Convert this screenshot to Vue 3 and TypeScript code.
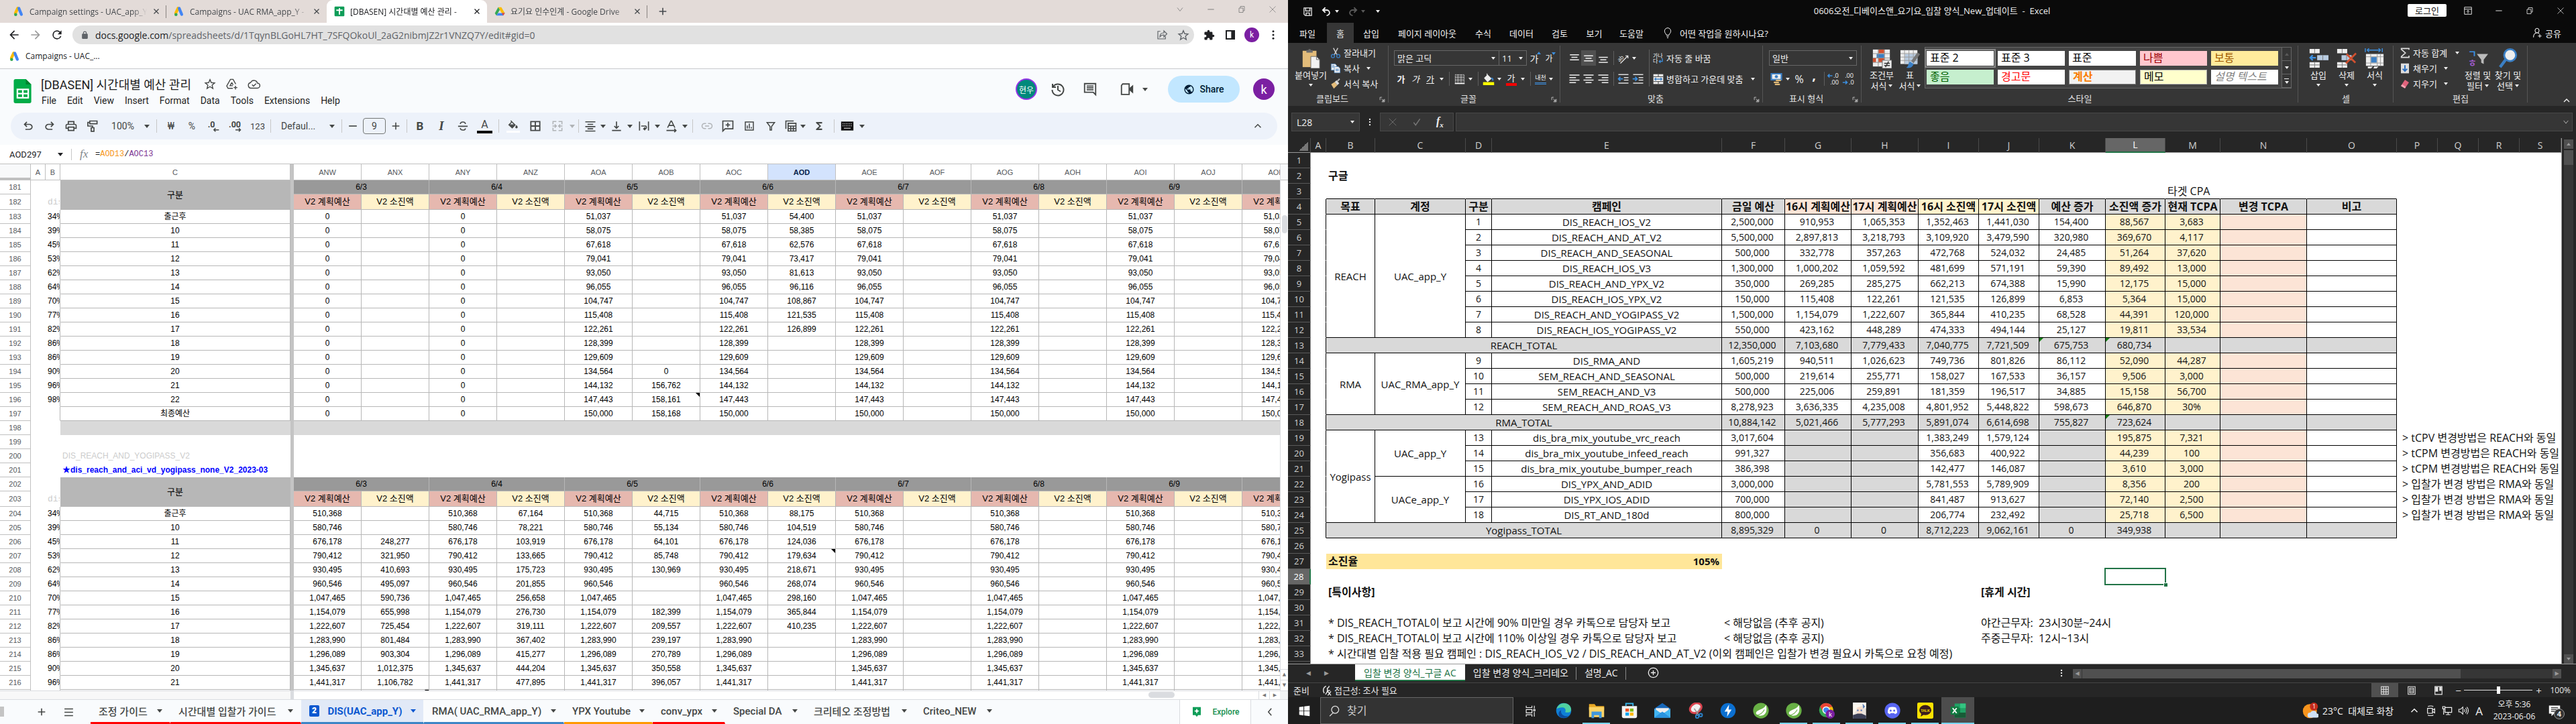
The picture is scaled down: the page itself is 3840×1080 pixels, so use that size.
<script setup lang="ts">
import { h } from 'vue'

type Slot = { k: 'icon' | 'text' | 'caret' | 'sep' | 'big'; n?: string; t?: string; w: number; c?: string; s?: number }

const st = (d: string, w = 2) => `<path d="${d}" fill="none" stroke="currentColor" stroke-width="${w}"/>`
const fl = (d: string) => `<path d="${d}" fill="currentColor"/>`

const ICONS: Record<string, [number, string]> = {
  ads: [24, '<path d="M9.5 5 4.5 16" stroke="#fbbc04" stroke-width="6.5" stroke-linecap="round"/><path d="M12.2 5.2l5.6 13.6" stroke="#4285f4" stroke-width="6.5" stroke-linecap="round"/><circle cx="5" cy="19" r="3.4" fill="#34a853"/>'],
  sheetTab: [24, '<rect x="1" y="1" width="22" height="22" rx="2" fill="#0f9d58"/><path d="M12 5v14M5 9.5h14" stroke="#fff" stroke-width="3"/>'],
  drive: [24, '<path d="M8.5 2.5h7l8 13.5h-7z" fill="#fbbc04"/><path d="M8.5 2.5 12 8.600 4.500 21.500 1 16z" fill="#34a853"/><path d="M4.500 21.500 8 15.800h15.500L19.500 21.500z" fill="#4285f4"/><path d="m16.500 15.800 7 0-4 5.700z" fill="#ea4335"/>'],
  close: [24, st('M5 5l14 14M19 5L5 19', 2.6)],
  closeThin: [24, st('M3 3l18 18M21 3L3 21', 1.4)],
  plus: [24, st('M12 4v16M4 12h16', 2.4)],
  minus: [24, st('M5 12h14', 2)],
  chevDown: [24, st('M4 7l8 10 8-10', 1.6)],
  chevUp: [24, st('M6 15l6-6 6 6')],
  chevLeft: [24, st('M15 5l-6 7 6 7')],
  min: [24, st('M4 12h16', 1.6)],
  restore: [24, st('M4 8h12v13H4zM8 8V3h12v13h-4', 1.6)],
  back: [24, fl('M20 11H7.800l5.600-5.600L12 4l-8 8 8 8 1.400-1.400L7.800 13H20v-2z')],
  fwd: [24, fl('M12 4l-1.400 1.400L16.200 11H4v2h12.200l-5.600 5.600L12 20l8-8z')],
  reload: [24, fl('M17.650 6.350A7.950 7.950 0 0 0 12 4a8 8 0 1 0 7.730 10h-2.080A6 6 0 1 1 12 6c1.660 0 3.140.69 4.220 1.780L13 11h7V4z')],
  lock: [24, fl('M18 8h-1V6A5 5 0 0 0 7 6v2H6a2 2 0 0 0-2 2v10c0 1.100.9 2 2 2h12a2 2 0 0 0 2-2V10a2 2 0 0 0-2-2zm-3.100 0H9.100V6a2.900 2.900 0 0 1 5.800 0z')],
  shareUrl: [24, st('M9 5H4v15h15v-5M8 16c0-6 4-8 8-8V4l6 6-6 6v-4c-4 0-6 1-8 4z', 1.6)],
  star: [24, st('M12 3.500l2.600 6.200 6.700.6-5.100 4.400 1.600 6.600L12 17.700l-5.800 3.600 1.600-6.600-5.100-4.400 6.700-.6z', 1.8)],
  puzzle: [24, fl('M20.500 11H19V7a2 2 0 0 0-2-2h-4V3.500a2.500 2.500 0 0 0-5 0V5H4a2 2 0 0 0-2 2v3.800h1.500a2.700 2.700 0 0 1 0 5.400H2V20c0 1.100.9 2 2 2h3.800v-1.500a2.700 2.700 0 0 1 5.400 0V22H17a2 2 0 0 0 2-2v-4h1.500a2.500 2.500 0 0 0 0-5z')],
  panel: [24, '<path d="M3 3h18v18H3z" fill="none" stroke="currentColor" stroke-width="3"/><path d="M14 3h7v18h-7z" fill="currentColor"/>'],
  dots: [24, '<circle cx="12" cy="5" r="2"/><circle cx="12" cy="12" r="2"/><circle cx="12" cy="19" r="2"/>'],
  driveAdd: [24, st('M19.500 12 14.500 3h-5L2.500 15.500 5 20h9M12 9l-3.200 6H14M12 9l2.500 4.500M19 15v7M15.500 18.500h7', 1.800)],
  cloud: [24, st('M18.500 10A6.700 6.700 0 0 0 5.800 9.200 5.200 5.200 0 0 0 6.500 19.500h12a4.700 4.700 0 0 0 0-9.500zM8.500 13l2.700 2.700 4.800-4.800', 1.800)],
  history: [24, st('M4 4v5h5M4.500 9A8.500 8.500 0 1 1 3.500 13M12 7v6l4 2.500')],
  comment: [24, st('M3 3h18v18l-4-4H3zM6.500 7h11M6.500 10h11M6.500 13h11')],
  video: [24, '<path d="M5 3.500h10.500v17H3V6z" fill="none" stroke="currentColor" stroke-width="2"/><path d="M16 10l6-5v14l-6-5z" fill="currentColor"/>'],
  globe: [24, '<path d="M12 2a10 10 0 1 0 0 20 10 10 0 0 0 0-20zm-1 17.900A8 8 0 0 1 4.200 10.200L9 15v1c0 1.100.9 2 2 2zm6.900-2.500A2 2 0 0 0 16 16h-1v-3a1 1 0 0 0-1-1H8v-2h2a1 1 0 0 0 1-1V7h2a2 2 0 0 0 2-2v-.400a8 8 0 0 1 2.900 12.800z" fill="currentColor"/>'],
  undo: [24, fl('M7 19v-2h7.100q1.575 0 2.737-1T18 13.500 16.838 11 14.100 10H7.800l2.600 2.600L9 14 4 9l5-5 1.400 1.400L7.800 8h6.300q2.425 0 4.163 1.575T20 13.500t-1.737 3.925T14.100 19z')],
  redo: [24, fl('M9.900 19q-2.425 0-4.163-1.575T4 13.500t1.737-3.925T9.900 8h6.300l-2.600-2.600L15 4l5 5-5 5-1.400-1.400 2.600-2.600H9.900q-1.575 0-2.737 1T6 13.500 7.163 16 9.900 17H17v2z')],
  print: [24, fl('M19 8h-1V3H6v5H5c-1.660 0-3 1.340-3 3v6h4v4h12v-4h4v-6c0-1.660-1.340-3-3-3zM8 5h8v3H8V5zm8 12v2H8v-4h8v2zm2-2v-2H6v2H4v-4c0-.55.45-1 1-1h14c.55 0 1 .45 1 1v4h-2z')],
  paint: [24, st('M7 3h13v5H7zM7 5.500H3.500V12H12v3M9.500 15h5v6.500h-5z')],
  dec0: [24, '<text x="2" y="14" font-size="15" font-weight="700" font-family="Roboto, sans-serif">.0</text><path d="M22 19h-9m3-3-3 3 3 3" fill="none" stroke="currentColor" stroke-width="1.800"/>'],
  dec00: [24, '<text x="0" y="14" font-size="15" font-weight="700" font-family="Roboto, sans-serif">.00</text><path d="M12 19h9m-3-3 3 3-3 3" fill="none" stroke="currentColor" stroke-width="1.800"/>'],
  strike: [24, st('M2.500 12.500h19M17 8c0-2.500-2-4-5-4S7 5.500 7 8M7 16c0 2.500 2 4 5 4s5-1.500 5-3.500', 2.200)],
  fill: [24, '<path d="M7 3l9 9-6 6-7-6.500 6-6zM5 11.500h10" fill="none" stroke="currentColor" stroke-width="2"/><path d="M4 12h11l-5 5.500z" fill="currentColor"/><path d="M19 12s2.500 3 2.500 4.500a2.400 2.400 0 0 1-5 0C16.500 15 19 12 19 12z" fill="currentColor"/>'],
  borders: [24, st('M4 4h16v16H4zM12 4v16M4 12h16', 2.200)],
  merge: [24, st('M10 4H4v5M14 4h6v5M10 20H4v-5M14 20h6v-5M3 12h7m-3-3 3 3-3 3M21 12h-7m3-3-3 3 3 3', 1.800)],
  center: [24, st('M3 4.500h18M7 9h10M3 13h18M7 17h10M3 21h18', 2)],
  vbottom: [24, st('M4 20h16M12 4v12m-4-4 4 4 4-4', 2)],
  wrapTxt: [24, st('M4 4v16M20 4v16M7 12h8a3 3 0 0 1 0 5h-3m2-2.500-2.500 2.500 2.500 2.500', 2)],
  rotate: [24, st('M5 15L11 3h1l6 12M7.500 11h8M3 20h17m-3-3 3 3-3 3', 2)],
  link: [24, st('M10 7H7a5 5 0 0 0 0 10h3M14 7h3a5 5 0 0 1 0 10h-3M8 12h8', 2)],
  addCom: [24, st('M3 3h18v14H7l-4 4zM12 6v8M8 10h8', 2)],
  chart: [24, st('M4 4h16v16H4zM8 17v-6M12 17V7M16 17v-3', 2)],
  funnel: [24, st('M4.500 5h15l-6 8v7h-3v-7z', 2)],
  fview: [24, st('M3 17V3h14M7 7h14v14H7zM7 12h14M7 16.500h14M11.700 12v9M16.300 12v9', 2)],
  sigma: [24, fl('M18 4H6v2l6.500 6L6 18v2h12v-3h-7l5-5-5-5h7z')],
  kb: [24, '<path d="M1 4h22v16H1z" fill="#111"/><path d="M3.500 8h17M3.500 11.500h17" stroke="#ccc" stroke-width="1.500" stroke-dasharray="1.500 1.500"/><path d="M6 16h12" stroke="#ccc" stroke-width="1.500"/>'],
  burger: [24, st('M3 5h18M3 12h18M3 19h18', 2.200)],
  explore: [24, '<path d="M3 1h18v18h-6l-3 4-3-4H3z" fill="#0f9d58"/><path d="M12 4l1.800 4.200L18 10l-4.200 1.800L12 16l-1.800-4.200L6 10l4.200-1.800z" fill="#fff"/>'],
  sheets: [40, '<path d="M8 0h17l9 9v28a3 3 0 0 1-3 3H8a3 3 0 0 1-3-3V3a3 3 0 0 1 3-3z" fill="#00ac47"/><path d="M25 0l9 9h-9z" fill="#00832d"/><path d="M11 17h18v14H11zM11 24h18M20 17v14" fill="none" stroke="#fff" stroke-width="2.600"/>'],
  xSave: [24, st('M3 3h18v18H6l-3-3zM7 3v7h10V3M8 21v-6h8v6', 2)],
  xUndo: [24, '<path d="M9 2L3 8l6 6M4 8h8a7 6.500 0 0 1 0 13" fill="none" stroke="currentColor" stroke-width="3"/>'],
  xRedo: [24, '<path d="M15 2l6 6-6 6M20 8h-8a7 6.500 0 0 0 0 13" fill="none" stroke="currentColor" stroke-width="3"/>'],
  ribOpt: [24, st('M3 3h18v18H3zM3 8h18M12 19v-8m-3.500 3.500L12 11l3.500 3.500', 1.600)],
  bulb: [24, st('M9 17c0-3-4-4-4-9a7 7 0 0 1 14 0c0 5-4 6-4 9zM9.500 20h5M10.500 23h3', 1.500)],
  person: [24, st('M12 12a4.500 5 0 1 0-.100 0c-5 0-8 4-8 10M12 12c2 0 3.500.6 5 2M18 15v8M14 19h8', 1.600)],
  paste: [32, '<path d="M3 4h22v26H3z" fill="#e3bc7a"/><path d="M9 7V3h3a2 2 0 0 1 4 0h3v4z" fill="#6b6b6b"/><path d="M16 13h9l5 5v14H16z" fill="#f2f2f2" stroke="#666"/><path d="M25 13v5h5" fill="none" stroke="#666"/>'],
  cut: [24, '<path d="M7 1l8 15M17 1L9 16" stroke="#ccc" stroke-width="2.200" fill="none"/><circle cx="6" cy="19" r="3.600" fill="none" stroke="#3b7fc4" stroke-width="2"/><circle cx="18" cy="19" r="3.600" fill="none" stroke="#3b7fc4" stroke-width="2"/>'],
  copy: [24, '<path d="M2 2h9l3 3v11H2z" fill="#eee" stroke="#3b7fc4"/><path d="M9 8h9l4 4v10H9z" fill="#eee" stroke="#3b7fc4"/><path d="M12 14h7M12 17h7M4 6h5M4 9h4" stroke="#3b7fc4" stroke-width="1.500"/>'],
  brush: [24, '<path d="M2 13l8-5 6 7-8 8z" fill="#e3bc7a"/><path d="M10 8l4-4 6 7-4 4z" fill="#ddd"/><path d="M16 6l5-5" stroke="#bbb" stroke-width="3"/>'],
  xBorder: [24, '<path d="M2 2h20v19H2z" fill="#555"/><path d="M2 2h20v19H2zM2 8h20M2 14h20M8 2v19M15 2v19" fill="none" stroke="#ddd" stroke-width="1.500" stroke-dasharray="2 1.500"/><path d="M1 22h22" stroke="#fff" stroke-width="2"/>'],
  xFill: [24, '<path d="M9 1v6M4 10l6-6 7 7-7 6z" fill="#eee" stroke="#eee" stroke-width="1.500"/><path d="M17 10c3 0 4 2 3 5" stroke="#3b7fc4" stroke-width="3" fill="none"/><path d="M1 18h22v6H1z" fill="#ff0"/>'],
  tAl: [24, st('M3 5h18M6 10h12M3 15h18', 2)],
  mAl: [24, st('M3 7h18M6 12h12M3 17h18', 2)],
  bAl: [24, st('M3 10h18M6 15h12M3 20h18', 2)],
  lAl: [24, st('M2 4h20M2 9h13M2 14h20M2 19h13', 2)],
  cAl: [24, st('M2 4h20M6 9h12M2 14h20M6 19h12', 2)],
  rAl: [24, st('M2 4h20M9 9h13M2 14h20M9 19h13', 2)],
  orient: [24, '<text x="0" y="15" font-size="11" transform="rotate(-45 8 12)" font-family="Open Sans, sans-serif">ab</text><path d="M6 22L21 7m-5 0h5v5" fill="none" stroke="currentColor" stroke-width="1.600"/>'],
  outd: [24, '<path d="M2 3h20M13 9h9M13 14h9M2 20h20" stroke="#ddd" stroke-width="2"/><path d="M11 11.500H2m4-4-4 4 4 4" fill="none" stroke="#3b8fe0" stroke-width="2.200"/>'],
  ind: [24, '<path d="M2 3h20M13 9h9M13 14h9M2 20h20" stroke="#ddd" stroke-width="2"/><path d="M1 11.500h9m-4-4 4 4-4 4" fill="none" stroke="#3b8fe0" stroke-width="2.200"/>'],
  wrapX: [24, '<text x="0" y="11" font-size="12" font-family="Noto Sans CJK KR, sans-serif">가나</text><text x="0" y="23" font-size="12" font-family="Noto Sans CJK KR, sans-serif">다</text><path d="M21 12v7h-7m3-3-3 3 3 3" fill="none" stroke="#3b8fe0" stroke-width="2"/>'],
  mergeX: [24, '<path d="M1 1h22v22H1z" fill="#eee"/><path d="M1 6.500h22M1 17.500h22M12 1v5.500M12 17.500V23" stroke="#444" stroke-width="1.500"/><path d="M4 12h16M7 9l-3 3 3 3M17 9l3 3-3 3" stroke="#3b7fc4" fill="none" stroke-width="2"/>'],
  money: [24, '<path d="M2 1h20v12H2z" fill="#eee" stroke="#3b7fc4" stroke-width="3"/><circle cx="12" cy="7" r="3" fill="#3b7fc4"/><path d="M11 13h10v3H11zM7 17h10v3H7zM9 21h10v3H9z" fill="#e3bc7a"/>'],
  xd0: [24, '<text x="11" y="10" font-size="11" font-family="Open Sans, sans-serif">.0</text><text x="5" y="22" font-size="11" font-family="Open Sans, sans-serif">.00</text><path d="M9 6H1m3-3L1 6l3 3" stroke="#3b8fe0" fill="none" stroke-width="2"/>'],
  xd00: [24, '<text x="5" y="10" font-size="11" font-family="Open Sans, sans-serif">.00</text><text x="12" y="22" font-size="11" font-family="Open Sans, sans-serif">.0</text><path d="M1 18h8m-3-3 3 3-3 3" stroke="#3b8fe0" fill="none" stroke-width="2"/>'],
  cond: [32, '<path d="M2 2h27v27H2z" fill="#eee"/><path d="M11 2h9v6h-9zM11 16h9v6h-9zM2 16h5v6H2z" fill="#d2502f"/><path d="M8 9h12v6H8z" fill="#3b7fc4"/><path d="M2 8.500h27M2 15.500h27M2 22.500h27M10.500 2v27M20.500 2v27" stroke="#888" fill="none"/><path d="M17 19h15v13H17z" fill="#eee" stroke="#666"/><path d="M20 24h9M20 27.500h9M27 21l-5 9" stroke="#333" stroke-width="1.500"/>'],
  fmtTbl: [32, '<path d="M1 3h27v22H1z" fill="#eee"/><path d="M8 9h20v16H8z" fill="#b8cbe0"/><path d="M1 8.500h27M1 14h27M1 19.500h27M7.500 3v22M14.500 3v22M21.500 3v22" stroke="#999" fill="none"/><path d="M30 8L20 22" stroke="#777" stroke-width="5"/><path d="M16 21l6 4c-2 6-7 7-12 6 4-2 3-6 6-10z" fill="#3b7fc4"/>'],
  insC: [32, '<path d="M2 1h16v7H2zM2 22h16v9H2z" fill="#eee"/><path d="M14 11h18v8H14z" fill="#b8cbe0"/><path d="M10 1v7M10 22v9M2 26.500h16M23 11v8" stroke="#777" fill="none"/><path d="M12 15H3m4-4-4 4 4 4" stroke="#3b8fe0" stroke-width="2.500" fill="none"/>'],
  delC: [32, '<path d="M1 1h16v7H1zM1 22h16v9H1z" fill="#eee"/><path d="M8 11h16v8H8z" fill="#b8cbe0"/><path d="M9 1v7M9 22v9M1 26.500h16M16 11v8" stroke="#777" fill="none"/><path d="M16 9l14 14M31 8L15 24" stroke="#d2502f" stroke-width="3" fill="none"/>'],
  fmtC: [32, '<path d="M2 9h28v19H2zM5 29h8l-3 3H5zM15 29h7l-3 3h-5z" fill="#eee"/><path d="M10 14h9v9h-9z" fill="#3b7fc4"/><path d="M2 13.500h28M2 23.500h28M9.500 9v19M20 9v19M25 9v19" stroke="#999" fill="none"/><path d="M1 0v6M28 0v6M4 3h21M7 0L4 3l3 3M22 0l3 3-3 3" stroke="#3b8fe0" stroke-width="1.500" fill="none"/>'],
  sigX: [24, '<path d="M21 5V2H4v2l9 8-9 8v2h17v-4" fill="none" stroke="#ddd" stroke-width="2.500"/>'],
  down: [24, '<path d="M3 1h18v22H3z" fill="#ddd"/><path d="M12 5v13m-5-5 5 5 5-5" fill="none" stroke="#2b6fc0" stroke-width="3"/>'],
  erase: [24, '<path d="M12 3l9 6-9 13-9-5z" fill="#e0637c"/><path d="M3 17l3-4 8 6-2 3z" fill="#f2a6b4"/>'],
  sort: [32, '<text x="0" y="14" font-size="15" font-weight="700" fill="#3b8fe0" font-family="Noto Sans CJK KR, sans-serif">ㄱ</text><text x="0" y="29" font-size="15" font-weight="700" fill="#9b59c6" font-family="Noto Sans CJK KR, sans-serif">ㅎ</text><path d="M14 9h18l-7 9v7l-4-2v-5z" fill="#bbb"/>'],
  find: [32, '<path d="M12 18L3 30" stroke="#3b7fc4" stroke-width="4.500"/><circle cx="19" cy="11" r="9.500" fill="#eee" stroke="#3b7fc4" stroke-width="3"/>'],
  check: [24, st('M4 13l5 7L20 4', 2.600)],
  winlogo: [24, fl('M1 4l9-1.300v8.800H1zM11.500 2.500L23 1v10.500H11.500zM1 12.700h9v8.700L1 20zM11.500 12.700H23V23l-11.500-1.600z')],
  search: [24, st('M10 16L3 23M14.500 17a7.500 7.500 0 1 0-.010 0z', 1.800)],
  taskview: [24, st('M3 1v4h12V1M3 9h12v7H3zM3 24v-4h12v4M20 1v6M20 14v10M18.500 9h3v3h-3z', 1.600)],
  edge: [32, '<circle cx="16" cy="16" r="15" fill="#0f7fd6"/><path d="M2 12C5 3 15-1 23 2.500c7 3 9 10 7 14-2 4-9 4-11 2 2-4 0-9-6-9-5 0-9 2-11 2.500z" fill="#4fd0a0"/><path d="M11 15c-2 7 4 13 12 12 3 0 5-2 6-4-4 7-14 10-21 5-4-5-2-11 3-13z" fill="#0b4a9e"/>'],
  folder: [32, '<path d="M1 3h11l3 4h16v8H1z" fill="#e8a825"/><path d="M1 9h30v20H1z" fill="#fbd467"/><path d="M6 18h20v13h-5v-6H11v6H6z" fill="#3f97dd"/>'],
  store: [32, '<path d="M9 7V2h14v5" fill="none" stroke="#35b1e6" stroke-width="2.500"/><path d="M1 7h30v20a4 4 0 0 1-4 4H5a4 4 0 0 1-4-4z" fill="#f3f3f3"/><path d="M8 12h7v6H8z" fill="#f25022"/><path d="M17 12h7v6h-7z" fill="#7fba00"/><path d="M8 20h7v6H8z" fill="#00a4ef"/><path d="M17 20h7v6h-7z" fill="#ffb900"/>'],
  mail: [32, '<path d="M0 12L16 1l16 11v18H0z" fill="#1666b8"/><path d="M3 11h26v9H3z" fill="#eee"/><path d="M0 12l16 11L32 12v18H0z" fill="#41b4f2"/><path d="M0 30l16-12 16 12z" fill="#2a93df"/>'],
  snip: [32, '<ellipse cx="17" cy="11" rx="12" ry="9" fill="#f0f0f0" stroke="#d9434e" stroke-width="4" transform="rotate(-30 17 11)"/><path d="M14 12l10 14M26 10l-9 16" stroke="#999" stroke-width="2"/><circle cx="20" cy="28" r="3" fill="none" stroke="#2a82c9" stroke-width="2.500"/><circle cx="27" cy="25" r="3" fill="none" stroke="#2a82c9" stroke-width="2.500"/>'],
  bolt: [32, '<circle cx="16" cy="16" r="15" fill="#0b6fd0"/><path d="M18 4l-9 14h6l-1 10 9-14h-6z" fill="#fff"/>'],
  leaf: [32, '<circle cx="16" cy="16" r="15.500" fill="#68b045"/><path d="M26 5c3 11 0 20-9 21-6 1-10-2-11-5 2-8 14-5 20-16z" fill="#fff"/><path d="M7 25c6 0 12-4 16-11" stroke="#68b045" stroke-width="1.500" fill="none"/>'],
  chrome: [32, '<circle cx="15" cy="15" r="14" fill="#34a853"/><path d="M15 1a14 14 0 0 1 12.500 8H15L9 19 3 8A14 14 0 0 1 15 1z" fill="#ea4335"/><path d="M27.500 9A14 14 0 0 1 15 29l6-10V9z" fill="#fbbc04"/><circle cx="15" cy="15" r="6.500" fill="#4285f4" stroke="#fff" stroke-width="2"/><circle cx="23" cy="23" r="9" fill="#7b1fa2"/><text x="20" y="28" font-size="13" fill="#fff" font-family="Roboto, sans-serif">k</text>'],
  anime: [32, '<path d="M3 0h26v32H3z" fill="#e9e3dc"/><path d="M3 0h26v12L20 6l-9 7-8 12z" fill="#fbf7ee"/><path d="M10 11c4-3 9-3 12 0l-2 11h-8z" fill="#f8dcc9"/><path d="M11 14h3v3h-3zM18 14h3v3h-3zM22 2l5 6-4 4z" fill="#5b7fb8"/><path d="M3 25l9-3h8l9 4v6H3z" fill="#3b3f55"/>'],
  discord: [32, '<circle cx="16" cy="16" r="15.500" fill="#5865f2"/><path d="M9 10c4-2 10-2 14 0 2 4 3 8 2 11l-4 2-1.500-2h-7L11 23l-4-2c-1-3 0-7 2-11z" fill="#fff"/><circle cx="12.500" cy="16" r="2" fill="#5865f2"/><circle cx="19.500" cy="16" r="2" fill="#5865f2"/>'],
  kakao: [32, '<rect width="32" height="32" rx="3" fill="#fae100"/><ellipse cx="16" cy="15" rx="12" ry="10" fill="#3a1d1d"/><path d="M8 22l-1 6 6-4z" fill="#3a1d1d"/><text x="7" y="18" font-size="7" font-weight="700" fill="#fae100" font-family="Liberation Sans, sans-serif">TALK</text>'],
  excel: [32, '<path d="M9 2h22v28H9z" fill="#21a366"/><path d="M20 2h11v9H20z" fill="#33c481"/><path d="M9 11h11v9H9z" fill="#107c41"/><path d="M9 20h22v10H9z" fill="#185c37"/><rect x="1" y="8" width="16" height="16" fill="#107c41"/><path d="M5 11l8 10M13 11L5 21" stroke="#fff" stroke-width="2.500"/>'],
  sun: [32, '<circle cx="15" cy="17" r="14" fill="#f7941d"/><path d="M15 30a5 5 0 0 1 1-10 7 7 0 0 1 13 2 4 4 0 0 1 0 8z" fill="#cfe0f5"/><circle cx="23" cy="8" r="8" fill="#c42b1c"/><text x="20" y="12" font-size="12" fill="#fff" font-family="Open Sans, sans-serif">1</text>'],
  meet: [24, st('M4 7h11v11H4zM15 11l5-3v9l-5-3M5 3c3-2 9-2 12 0M5 22c3 2 9 2 12 0', 1.800)],
  net: [24, st('M7 5h15v11H7zM14 16v5M9 21h10M2 3h5v5H2zM4 8v13', 1.800)],
  vol: [24, st('M2 9h4l5-5v16l-5-5H2zM14 9c1.500 2 1.500 4 0 6M17 6c3 4 3 8 0 12M20 4c4 5 4 11 0 16', 1.600)],
  note: [24, '<path d="M1 2h22v16H11l-5 5v-5H1z" fill="#fff"/><path d="M5 6.500h14M5 10h14M5 13.500h9" stroke="#222" stroke-width="1.500"/>'],
  access: [24, st('M10 2C4 5 2 12 6 18M12 8c4-3 5-3 5-6M13 8v6l-4 7M13 12h6M14 14l7 9M21 14l-7 9', 2.200)],
  vGrid: [24, st('M3 2h18v20H3zM3 9h18M3 15.500h18M9 2v20M15 2v20', 1.800)],
  vPage: [24, st('M3 2h18v20H3zM7 6h10v12H7zM7 10h10M7 14h10', 1.800)],
  vBreak: [24, '<path d="M3 2h18v20H3z" fill="none" stroke="currentColor" stroke-width="2"/><path d="M4 3h7v12H4zM14 3h6v10h-6z" fill="currentColor"/>'],
  addSh: [24, st('M12 2a10 10 0 1 0 .010 0zM12 7v10M7 12h10', 1.800)],
  launch: [24, st('M3 14V3h8M21 10v11H10M9 9l9 9m0-7v7h-7', 2)],
}

const Ic = (p: { n: string; s?: number }) => {
  const [vb, inner] = ICONS[p.n]
  return h('svg', { viewBox: `0 0 ${vb} ${vb}`, width: p.s ?? 20, height: p.s ?? 20, fill: 'currentColor', 'aria-hidden': 'true', innerHTML: inner })
}
Ic.props = ['n', 's']

const bw = (w: number) => ({ flexBasis: w + 'px' })
const fmt = (n: number | string) => (typeof n === 'number' ? n.toLocaleString('en-US') : n)

/* ---------- browser window ---------- */
const chromeTabs = [
  { i: 'ads', t: 'Campaign settings - UAC_app_Y', on: false },
  { i: 'ads', t: 'Campaigns - UAC RMA_app_Y -', on: false },
  { i: 'sheetTab', t: '[DBASEN] 시간대별 예산 관리 -', on: true },
  { i: 'drive', t: '요기요 인수인계 - Google Drive', on: false },
]
const menus = ['File', 'Edit', 'View', 'Insert', 'Format', 'Data', 'Tools', 'Extensions', 'Help']

const ic = (n: string, w: number, c = '', s = 20): Slot => ({ k: 'icon', n, w, c, s })
const tx = (t: string, w: number, c = ''): Slot => ({ k: 'text', t, w, c })
const ca = (w: number, c = ''): Slot => ({ k: 'caret', w, c })
const sp = (w: number): Slot => ({ k: 'sep', w })

const tools: Slot[] = [
  ic('undo', 32), ic('redo', 32), ic('print', 32), ic('paint', 32), tx('100%', 58, 'zoomv'), ca(14), sp(14),
  tx('₩', 30, 'cur'), tx('%', 32), ic('dec0', 32), ic('dec00', 34), tx('123', 32, 'num'), sp(6),
  tx('Defaul...', 80, 'fontn'), ca(18), sp(10), ic('minus', 24), { k: 'big', t: '9', w: 40 }, ic('plus', 24, '', 16), sp(8),
  tx('B', 32, 'bold'), tx('I', 32, 'ital'), ic('strike', 32, '', 18), tx('A', 33, 'ucol'), sp(8),
  ic('fill', 35, 'ufill'), ic('borders', 32), ic('merge', 34, 'dim'), ca(10, 'dim'), sp(8),
  ic('center', 28), ca(10), ic('vbottom', 30), ca(10), ic('wrapTxt', 31), ca(10), ic('rotate', 31), ca(10), sp(12),
  ic('link', 31, 'dim', 18), ic('addCom', 32), ic('chart', 32, '', 18), ic('funnel', 32, '', 18), ic('fview', 27), ca(10), ic('sigma', 38, '', 18), sp(6),
  ic('kb', 34), ca(10),
]

const dataCols = ['ANW', 'ANX', 'ANY', 'ANZ', 'AOA', 'AOB', 'AOC', 'AOD', 'AOE', 'AOF', 'AOG', 'AOH', 'AOI', 'AOJ', 'AOK']
const days = ['6/3', '6/4', '6/5', '6/6', '6/7', '6/8', '6/9']
const hours = ['출근후', '10', '11', '12', '13', '14', '15', '16', '17', '18', '19', '20', '21', '22', '최종예산']
const pct = ['34%', '39%', '45%', '53%', '62%', '64%', '70%', '77%', '82%', '86%', '86%', '90%', '96%', '98%', '']
const planA = [51037, 58075, 67618, 79041, 93050, 96055, 104747, 115408, 122261, 128399, 129609, 134564, 144132, 147443, 150000]
const planB = [510368, 580746, 676178, 790412, 930495, 960546, 1047465, 1154079, 1222607, 1283990, 1296089, 1345637, 1441317]
const spendA: Record<string, (number | string)[]> = {
  AOB: ['', '', '', '', '', '', '', '', '', '', '', 0, 156762, 158161, 158168],
  AOD: [54400, 58385, 62576, 73417, 81613, 96116, 108867, 121535, 126899],
}
const spendB: Record<string, (number | string)[]> = {
  ANX: ['', '', 248277, 321950, 410693, 495097, 590736, 655998, 725454, 801484, 903304, 1012375, 1106782],
  ANZ: [67164, 78221, 103919, 133665, 175723, 201855, 256658, 276730, 319111, 367402, 415277, 444204, 477895],
  AOB: [44715, 55134, 64101, 85748, 130969, '', '', 182399, 209557, 239197, 270789, 350558, 396057],
  AOD: [88175, 104519, 124036, 179634, 218671, 268074, 298160, 365844, 410235],
}
const notes = ['196AOB', '207AOD', '217ANX']

type GRow = { n: number | string; kind: 'date' | 'label' | 'data' | 'grey' | 'blank'; b?: string; c?: string; cls?: string; vals?: string[] }
const gRows: GRow[] = []
const block = (start: number, plan: number[], spend: Record<string, (number | string)[]>, zero: string[]) => {
  gRows.push({ n: start, kind: 'date' })
  gRows.push({ n: start + 1, kind: 'label' })
  for (let i = 0; i < plan.length; i++) {
    gRows.push({
      n: start + 2 + i, kind: 'data', b: pct[i], c: hours[i],
      vals: dataCols.map((c, j) => (j % 2 === 0 ? fmt(zero.includes(c) ? 0 : plan[i]) : fmt(spend[c]?.[i] ?? ''))),
    })
  }
}
block(181, planA, spendA, ['ANW', 'ANY'])
gRows.push({ n: 198, kind: 'grey' }, { n: 199, kind: 'blank' })
gRows.push({ n: 200, kind: 'blank', c: 'DIS_REACH_AND_YOGIPASS_V2', cls: 'faint' })
gRows.push({ n: 201, kind: 'blank', c: '★dis_reach_and_aci_vd_yogipass_none_V2_2023-03', cls: 'blue' })
block(202, planB, spendB, [])
gRows.push({ n: '', kind: 'data', vals: dataCols.map(() => '') })
const hasNote = (r: GRow, i: number) => notes.includes((r.n || 217) + dataCols[i])
const gWidths = [46, 22, 22, 343, 5, ...dataCols.map(() => 101)]
const sum = (a: number[]) => a.reduce((x, y) => x + y, 0)

const gTabs = [
  { t: '조정 가이드', w: 119, u: '#ff0000' }, { t: '시간대별 입찰가 가이드', w: 195, u: '#ff0000' },
  { t: 'DIS(UAC_app_Y)', w: 183, u: '#3d85c6', on: true }, { t: 'RMA( UAC_RMA_app_Y)', w: 209, u: '#3d85c6' },
  { t: 'YPX Youtube', w: 132, u: '#ff9900' }, { t: 'conv_ypx', w: 108, u: '#ff0000' },
  { t: 'Special DA', w: 120, u: '' }, { t: '크리테오 조정방법', w: 163, u: '' }, { t: 'Criteo_NEW', w: 127, u: '' },
]

/* ---------- spreadsheet window ---------- */
const xMenus = [
  { t: '파일', w: 58 }, { t: '홈', w: 40 }, { t: '삽입', w: 52 }, { t: '페이지 레이아웃', w: 115 }, { t: '수식', w: 52 },
  { t: '데이터', w: 62 }, { t: '검토', w: 52 }, { t: '보기', w: 51 }, { t: '도움말', w: 60 },
]
const fontRow: Slot[] = [
  tx('가', 21, 'b'), tx('가', 22, 'i'), tx('가', 22, 'u'), ca(12), sp(10), ic('xBorder', 21, '', 16), ca(12), sp(10),
  ic('xFill', 21, '', 18), ca(12), tx('가', 23, 'red'), ca(11), sp(12), tx('내천', 19, 'hanja'), ca(12),
]
const alignTop: Slot[] = [ic('tAl', 21, '', 18), ic('mAl', 22, 'sel', 18), ic('bAl', 22, '', 18), sp(8), ic('orient', 22, '', 18), ca(10)]
const alignBot: Slot[] = [ic('lAl', 21, '', 18), ic('cAl', 22, '', 18), ic('rAl', 22, '', 18), sp(8), ic('outd', 22, '', 18), ic('ind', 22, '', 18)]
const numRow: Slot[] = [ic('money', 22, '', 18), ca(12), tx('%', 22, 'pc'), tx(',', 22, 'comma'), sp(8), ic('xd0', 22), ic('xd00', 22)]
const styles = [
  { t: '표준 2', c: 'cur1' }, { t: '표준 3', c: '' }, { t: '표준', c: '' }, { t: '나쁨', c: 'bad' }, { t: '보통', c: 'mid' },
  { t: '좋음', c: 'good' }, { t: '경고문', c: 'warn' }, { t: '계산', c: 'calc' }, { t: '메모', c: 'memo' }, { t: '설명 텍스트', c: 'desc' },
]

const LET = 'ABCDEFGHIJKLMNOPQRS'.split('')
const xW = [23, 73, 135, 39, 343, 94, 99, 100, 90, 90, 99, 89, 82, 129, 134, 61, 61, 61, 62]
type Cell = { col: string; t: string; cs: number; rs: number; cls: string }
const put: Record<string, { t?: string; cs?: number; rs?: number; cls?: string }> = {}
const heads: [string, string][] = [
  ['목표', 'g'], ['계정', 'g'], ['구분', 'g'], ['캠페인', 'g'], ['금일 예산', 'g'], ['16시 계획예산', 'p'], ['17시 계획예산', 'p'],
  ['16시 소진액', 'y'], ['17시 소진액', 'y'], ['예산 증가', 'g'], ['소진액 증가', 'g'], ['현재 TCPA', 'g'], ['변경 TCPA', 'g'], ['비고', 'g'],
]
heads.forEach(([t, c], i) => (put[LET[i + 1] + 4] = { t, cls: `bd hd ${c}` }))
const camp: [number, string, string][] = [
  [5, 'DIS_REACH_IOS_V2', '2,500,000|910,953|1,065,353|1,352,463|1,441,030|154,400|88,567|3,683'],
  [6, 'DIS_REACH_AND_AT_V2', '5,500,000|2,897,813|3,218,793|3,109,920|3,479,590|320,980|369,670|4,117'],
  [7, 'DIS_REACH_AND_SEASONAL', '500,000|332,778|357,263|472,768|524,032|24,485|51,264|37,620'],
  [8, 'DIS_REACH_IOS_V3', '1,300,000|1,000,202|1,059,592|481,699|571,191|59,390|89,492|13,000'],
  [9, 'DIS_REACH_AND_YPX_V2', '350,000|269,285|285,275|662,213|674,388|15,990|12,175|15,000'],
  [10, 'DIS_REACH_IOS_YPX_V2', '150,000|115,408|122,261|121,535|126,899|6,853|5,364|15,000'],
  [11, 'DIS_REACH_AND_YOGIPASS_V2', '1,500,000|1,154,079|1,222,607|365,844|410,235|68,528|44,391|120,000'],
  [12, 'DIS_REACH_IOS_YOGIPASS_V2', '550,000|423,162|448,289|474,333|494,144|25,127|19,811|33,534'],
  [14, 'DIS_RMA_AND', '1,605,219|940,511|1,026,623|749,736|801,826|86,112|52,090|44,287'],
  [15, 'SEM_REACH_AND_SEASONAL', '500,000|219,614|255,771|158,027|167,533|36,157|9,506|3,000'],
  [16, 'SEM_REACH_AND_V3', '500,000|225,006|259,891|181,359|196,517|34,885|15,158|56,700'],
  [17, 'SEM_REACH_AND_ROAS_V3', '8,278,923|3,636,335|4,235,008|4,801,952|5,448,822|598,673|646,870|30%'],
  [19, 'dis_bra_mix_youtube_vrc_reach', '3,017,604|||1,383,249|1,579,124||195,875|7,321'],
  [20, 'dis_bra_mix_youtube_infeed_reach', '991,327|||356,683|400,922||44,239|100'],
  [21, 'dis_bra_mix_youtube_bumper_reach', '386,398|||142,477|146,087||3,610|3,000'],
  [22, 'DIS_YPX_AND_ADID', '3,000,000|||5,781,553|5,789,909||8,356|200'],
  [23, 'DIS_YPX_IOS_ADID', '700,000|||841,487|913,627||72,140|2,500'],
  [24, 'DIS_RT_AND_180d', '800,000|||206,774|232,492||25,718|6,500'],
]
camp.forEach(([r, name, vals], i) => {
  put['D' + r] = { t: String(i + 1), cls: 'bd' }
  put['E' + r] = { t: name, cls: 'bd name' }
  vals.split('|').forEach((v, j) => {
    const col = LET[5 + j]
    const bg = col === 'L' || col === 'M' ? 'y' : v === '' ? 'g' : ''
    put[col + r] = { t: v, cls: `bd nm ${bg}` }
  })
  put['N' + r] = { cls: 'bd p' }
  put['O' + r] = { cls: 'bd' }
})
const totals: [number, string, string][] = [
  [13, 'REACH_TOTAL', '12,350,000|7,103,680|7,779,433|7,040,775|7,721,509|675,753|680,734|||'],
  [18, 'RMA_TOTAL', '10,884,142|5,021,466|5,777,293|5,891,074|6,614,698|755,827|723,624|||'],
  [25, 'Yogipass_TOTAL', '8,895,329|0|0|8,712,223|9,062,161|0|349,938|||'],
]
totals.forEach(([r, name, vals]) => {
  put['B' + r] = { t: name, cs: 4, cls: 'bd g name' }
  vals.split('|').forEach((v, j) => (put[LET[5 + j] + r] = { t: v, cls: 'bd g nm' }))
})
put.B5 = { t: 'REACH', rs: 8, cls: 'bd name' }
put.C5 = { t: 'UAC_app_Y', rs: 8, cls: 'bd name' }
put.B14 = { t: 'RMA', rs: 4, cls: 'bd name' }
put.C14 = { t: 'UAC_RMA_app_Y', rs: 4, cls: 'bd name' }
put.B19 = { t: 'Yogipass', rs: 6, cls: 'bd name' }
put.C19 = { t: 'UAC_app_Y', rs: 3, cls: 'bd name' }
put.C22 = { t: 'UACe_app_Y', rs: 3, cls: 'bd name' }
put.K13.cls += ' err'
put.L13.cls += ' err'
put.L18.cls += ' err'
put.B2 = { t: '구글', cls: 'tl hb' }
put.M3 = { t: '타겟 CPA', cls: 'tl bt' }
put.B27 = { t: '소진율', cls: 'tl hb am', cs: 3 }
put.E27 = { t: '105%', cls: 'tr hb am' }
put.B29 = { t: '[특이사항]', cls: 'tl hb' }
put.J29 = { t: '[휴게 시간]', cls: 'tl hb' }
put.B31 = { t: '* DIS_REACH_TOTAL이 보고 시간에 90% 미만일 경우 카톡으로 담당자 보고', cls: 'tl' }
put.B32 = { t: '* DIS_REACH_TOTAL이 보고 시간에 110% 이상일 경우 카톡으로 담당자 보고', cls: 'tl' }
put.B33 = { t: '* 시간대별 입찰 적용 필요 캠페인 : DIS_REACH_IOS_V2 / DIS_REACH_AND_AT_V2 (이외 캠페인은 입찰가 변경 필요시 카톡으로 요청 예정)', cls: 'tl' }
put.F31 = { t: '< 해당없음 (추후 공지)', cls: 'tl' }
put.F32 = { t: '< 해당없음 (추후 공지)', cls: 'tl' }
put.J31 = { t: '야간근무자:  23시30분~24시', cls: 'tl' }
put.J32 = { t: '주중근무자:  12시~13시', cls: 'tl' }
const memo = ['> tCPV 변경방법은 REACH와 동일', '> tCPM 변경방법은 REACH와 동일', '> tCPM 변경방법은 REACH와 동일', '> 입찰가 변경 방법은 RMA와 동일', '> 입찰가 변경 방법은 RMA와 동일', '> 입찰가 변경 방법은 RMA와 동일']
memo.forEach((t, i) => (put['P' + (19 + i)] = { t, cls: 'tl memo' }))
put.L28 = { cls: 'cursor' }

const covered = new Set<string>()
const xRows: Cell[][] = []
for (let r = 1; r <= 34; r++) {
  const row: Cell[] = []
  LET.forEach((c, ci) => {
    if (covered.has(c + r)) return
    const p = put[c + r] ?? {}
    const cs = p.cs ?? 1
    const rs = p.rs ?? 1
    for (let y = 0; y < rs; y++) for (let x = 0; x < cs; x++) covered.add(LET[ci + x] + (r + y))
    let cls = p.cls ?? ''
    if (c === 'A' && r >= 4 && r <= 25) cls += ' br'
    if (r === 3 && ci >= 1 && ci <= 14) cls += ' bt'
    row.push({ col: c, t: p.t ?? '', cs, rs, cls })
  })
  xRows.push(row)
}

const apps = [
  { n: 'edge', u: false }, { n: 'folder', u: true }, { n: 'store', u: false }, { n: 'mail', u: false }, { n: 'snip', u: false },
  { n: 'bolt', u: false }, { n: 'leaf', u: false }, { n: 'leaf', u: true }, { n: 'chrome', u: true }, { n: 'anime', u: true },
  { n: 'discord', u: true }, { n: 'kakao', u: true }, { n: 'excel', u: true },
]
</script>

<template>
  <div class="desk">
    <section class="win chrome">
      <nav class="tabs">
        <div v-for="(t, i) in chromeTabs" :key="i" class="tab" :class="{ on: t.on, bar: i === 0 || i === 3 }">
          <Ic :n="t.i" :s="16" /><span class="tt">{{ t.t }}</span>
          <button aria-label="Close tab"><Ic n="close" :s="12" /></button>
        </div>
        <button class="newtab" aria-label="New tab"><Ic n="plus" :s="16" /></button>
        <div class="wctl">
          <button aria-label="Search tabs"><Ic n="chevDown" :s="12" /></button>
          <button aria-label="Minimize"><Ic n="min" :s="14" /></button>
          <button aria-label="Restore"><Ic n="restore" :s="12" /></button>
          <button aria-label="Close"><Ic n="closeThin" :s="12" /></button>
        </div>
      </nav>
      <div class="nav">
        <button class="nb" aria-label="Back"><Ic n="back" /></button>
        <button class="nb dis" aria-label="Forward"><Ic n="fwd" /></button>
        <button class="nb" aria-label="Reload"><Ic n="reload" /></button>
        <div class="url">
          <Ic n="lock" :s="13" />
          <a href="#"><b>docs.google.com</b>/spreadsheets/d/1TqynBLGoHL7HT_7SFQOkoUl_2aG2nibmJZ2r1VNZQ7Y/edit#gid=0</a>
          <span class="fx1"></span>
          <button class="ub" aria-label="Share page"><Ic n="shareUrl" :s="18" /></button>
          <button class="ub" aria-label="Bookmark"><Ic n="star" :s="18" /></button>
        </div>
        <button class="ext" aria-label="Extensions"><Ic n="puzzle" :s="17" /></button>
        <button class="ext" aria-label="Side panel"><Ic n="panel" :s="16" /></button>
        <button class="ext" aria-label="Profile"><span class="av sm">k</span></button>
        <button class="ext" aria-label="Menu"><Ic n="dots" :s="18" /></button>
      </div>
      <div class="marks"><Ic n="ads" :s="16" /><a href="#">Campaigns - UAC_...</a></div>

      <header class="ghead">
        <Ic n="sheets" :s="36" class="glogo" />
        <div class="gt">
          <div class="gt1"><h1>[DBASEN] 시간대별 예산 관리</h1><Ic n="star" :s="18" /><Ic n="driveAdd" :s="19" /><Ic n="cloud" :s="19" /></div>
          <div class="gmenu"><button v-for="m in menus" :key="m">{{ m }}</button></div>
        </div>
        <div class="gr">
          <span class="av teal">현우</span>
          <button aria-label="History"><Ic n="history" :s="24" /></button>
          <button aria-label="Comments"><Ic n="comment" :s="22" /></button>
          <button class="vid" aria-label="Call"><Ic n="video" :s="22" /><i class="ca"></i></button>
          <button class="share"><Ic n="globe" :s="17" />Share</button>
          <span class="av lg">k</span>
        </div>
      </header>
      <div class="gbar">
        <div class="gtools">
          <template v-for="(s, i) in tools" :key="i">
            <i v-if="s.k === 'sep'" class="slot vs" :style="bw(s.w)"></i>
            <span v-else-if="s.k === 'caret'" class="slot" :class="s.c" :style="bw(s.w)"><i class="ca"></i></span>
            <label v-else-if="s.k === 'big'" class="slot" :style="bw(s.w)"><input class="fs" :value="s.t" aria-label="Font size" /></label>
            <button v-else class="slot" :class="s.c" :style="bw(s.w)"><Ic v-if="s.n" :n="s.n" :s="s.s" /><span v-else>{{ s.t }}</span></button>
          </template>
          <button class="gup" aria-label="Hide menus"><Ic n="chevUp" :s="18" /></button>
        </div>
      </div>
      <div class="gform">
        <input class="gname" value="AOD297" aria-label="Name box" /><i class="ca"></i><i class="vline"></i>
        <em>fx</em><code>=<span class="o1">AOD13</span>/<span class="o2">AOC13</span></code>
      </div>
      <div class="gbody">
        <div class="gwrap">
          <table class="sheet" :style="{ width: sum(gWidths) + 'px' }">
            <colgroup><col v-for="(w, i) in gWidths" :key="i" :style="{ width: w + 'px' }" /></colgroup>
            <thead>
              <tr>
                <th class="corner"></th><th>A</th><th>B</th><th>C</th><th class="fz"></th>
                <th v-for="c in dataCols" :key="c" :class="{ hot: c === 'AOD' }">{{ c }}</th>
              </tr>
            </thead>
            <tbody>
              <tr v-for="(r, ri) in gRows" :key="ri" :class="r.kind">
                <th>{{ r.n }}</th>
                <td></td>
                <td class="cb">{{ r.kind === 'label' ? '' : r.b }}<span v-if="r.kind === 'label'" class="mono">dis</span></td>
                <td v-if="r.kind === 'date'" rowspan="2" class="cat">구분</td>
                <td v-else-if="r.kind !== 'label'" class="cc" :class="r.cls">{{ r.c }}</td>
                <td class="fz"></td>
                <template v-if="r.kind === 'date'">
                  <td v-for="d in days" :key="d" colspan="2" class="dt">{{ d }}</td><td class="dt"></td>
                </template>
                <template v-else-if="r.kind === 'label'">
                  <td v-for="(c, i) in dataCols" :key="c" :class="i % 2 ? 'spend' : 'plan'">{{ i % 2 ? 'V2 소진액' : 'V2 계획예산' }}</td>
                </template>
                <template v-else-if="r.kind === 'data'">
                  <td v-for="(v, i) in r.vals" :key="i" :class="{ marked: hasNote(r, i) }">{{ v }}</td>
                </template>
                <td v-else colspan="15" class="rest"></td>
              </tr>
            </tbody>
          </table>
        </div>
        <div class="gvs"><i class="hd"></i><i class="th"></i><span class="sb">▲</span><span class="sb">▼</span></div>
      </div>
      <div class="ghs"><i class="l"></i><i class="f"></i><span class="fx1"></span><i class="th"></i><span class="sb">◀</span><span class="sb">▶</span><i class="cr"></i></div>
      <footer class="gtabs">
        <i class="stub"></i>
        <button class="ga" aria-label="Add sheet"><Ic n="plus" :s="16" /></button>
        <button class="ga" aria-label="All sheets"><Ic n="burger" :s="17" /></button>
        <button v-for="t in gTabs" :key="t.t" class="gtab" :class="{ on: t.on }" :style="{ flexBasis: t.w + 'px', borderBottomColor: t.u || 'transparent' }">
          <b v-if="t.on" class="bdg">2</b><span>{{ t.t }}</span><i class="ca"></i>
        </button>
        <span class="fx1"></span>
        <button class="expl"><Ic n="explore" :s="16" />Explore</button>
        <button class="gcol" aria-label="Show side panel"><Ic n="chevLeft" :s="18" /></button>
      </footer>
    </section>

    <section class="win xl">
      <header class="xtitle">
        <div class="qa">
          <Ic n="xSave" :s="15" /><Ic n="xUndo" :s="15" class="m1" /><i class="ca"></i><Ic n="xRedo" :s="15" class="dim m1" /><i class="ca dim"></i><i class="ca m2"></i>
        </div>
        <h2>0606오전_디베이스앤_요기요_입찰 양식_New_업데이트&nbsp; -&nbsp; Excel</h2>
        <button class="login">로그인</button>
        <div class="wctl">
          <button aria-label="Ribbon options"><Ic n="ribOpt" :s="14" /></button>
          <button aria-label="Minimize"><Ic n="min" :s="14" /></button>
          <button aria-label="Restore"><Ic n="restore" :s="12" /></button>
          <button aria-label="Close"><Ic n="closeThin" :s="12" /></button>
        </div>
      </header>
      <nav class="xmenu">
        <button v-for="m in xMenus" :key="m.t" :class="{ on: m.t === '홈' }" :style="bw(m.w)">{{ m.t }}</button>
        <Ic n="bulb" :s="16" class="bulb" /><span>어떤 작업을 원하시나요?</span>
        <button class="xshare"><Ic n="person" :s="16" />공유</button>
      </nav>
      <div class="rib">
        <div class="grp clip">
          <div class="gb">
            <button class="lgb"><Ic n="paste" :s="30" /><span>붙여넣기</span><i class="ca"></i></button>
            <div class="col3">
              <button><Ic n="cut" :s="16" />잘라내기</button>
              <button><Ic n="copy" :s="16" />복사<i class="ca"></i></button>
              <button><Ic n="brush" :s="16" />서식 복사</button>
            </div>
          </div>
          <div class="gl">클립보드<Ic n="launch" :s="9" /></div>
        </div>
        <div class="grp font">
          <div class="gb rows">
            <div class="r">
              <label class="pick f"><select aria-label="Font"><option>맑은 고딕</option></select><i class="ca"></i></label>
              <label class="pick z"><select aria-label="Size"><option>11</option></select><i class="ca"></i></label>
              <button class="ga1">가</button><button class="ga2">가</button>
            </div>
            <div class="r">
              <template v-for="(s, i) in fontRow" :key="i">
                <i v-if="s.k === 'sep'" class="slot vs" :style="bw(s.w)"></i>
                <span v-else-if="s.k === 'caret'" class="slot" :style="bw(s.w)"><i class="ca"></i></span>
                <button v-else class="slot" :class="s.c" :style="bw(s.w)"><Ic v-if="s.n" :n="s.n" :s="s.s" /><span v-else>{{ s.t }}</span></button>
              </template>
            </div>
          </div>
          <div class="gl">글꼴<Ic n="launch" :s="9" /></div>
        </div>
        <div class="grp align">
          <div class="gb">
            <div class="rows al">
              <div v-for="(row, ri) in [alignTop, alignBot]" :key="ri" class="r">
                <template v-for="(s, i) in row" :key="i">
                  <i v-if="s.k === 'sep'" class="slot vs" :style="bw(s.w)"></i>
                  <span v-else-if="s.k === 'caret'" class="slot" :style="bw(s.w)"><i class="ca"></i></span>
                  <button v-else class="slot" :class="s.c" :style="bw(s.w)"><Ic v-if="s.n" :n="s.n" :s="s.s" /></button>
                </template>
              </div>
            </div>
            <div class="rows wr">
              <button class="r"><Ic n="wrapX" :s="16" />자동 줄 바꿈</button>
              <button class="r"><Ic n="mergeX" :s="16" />병합하고 가운데 맞춤<i class="ca"></i></button>
            </div>
          </div>
          <div class="gl">맞춤<Ic n="launch" :s="9" /></div>
        </div>
        <div class="grp numb">
          <div class="gb rows">
            <div class="r"><label class="pick n"><select aria-label="Number format"><option>일반</option></select><i class="ca"></i></label></div>
            <div class="r">
              <template v-for="(s, i) in numRow" :key="i">
                <i v-if="s.k === 'sep'" class="slot vs" :style="bw(s.w)"></i>
                <span v-else-if="s.k === 'caret'" class="slot" :style="bw(s.w)"><i class="ca"></i></span>
                <button v-else class="slot" :class="s.c" :style="bw(s.w)"><Ic v-if="s.n" :n="s.n" :s="s.s" /><span v-else>{{ s.t }}</span></button>
              </template>
            </div>
          </div>
          <div class="gl">표시 형식<Ic n="launch" :s="9" /></div>
        </div>
        <div class="grp sty">
          <div class="gb">
            <button class="lgb"><Ic n="cond" :s="30" /><span>조건부</span><span>서식<i class="ca"></i></span></button>
            <button class="lgb"><Ic n="fmtTbl" :s="30" /><span>표</span><span>서식<i class="ca"></i></span></button>
            <div class="gal">
              <div class="gg"><button v-for="s in styles" :key="s.t" :class="s.c">{{ s.t }}</button></div>
              <div class="gs"><span class="dim"><i class="ca up"></i></span><span><i class="ca"></i></span><span class="more"><i class="ca"></i></span></div>
            </div>
          </div>
          <div class="gl">스타일</div>
        </div>
        <div class="grp cel">
          <div class="gb">
            <button class="lgb"><Ic n="insC" :s="30" /><span>삽입</span><i class="ca"></i></button>
            <button class="lgb"><Ic n="delC" :s="30" /><span>삭제</span><i class="ca"></i></button>
            <button class="lgb"><Ic n="fmtC" :s="30" /><span>서식</span><i class="ca"></i></button>
          </div>
          <div class="gl">셀</div>
        </div>
        <div class="grp edt">
          <div class="gb">
            <div class="col3">
              <button><Ic n="sigX" :s="16" />자동 합계<i class="ca far"></i></button>
              <button><Ic n="down" :s="16" />채우기<i class="ca"></i></button>
              <button><Ic n="erase" :s="16" />지우기<i class="ca"></i></button>
            </div>
            <button class="lgb"><Ic n="sort" :s="30" /><span>정렬 및</span><span>필터<i class="ca"></i></span></button>
            <button class="lgb"><Ic n="find" :s="30" /><span>찾기 및</span><span>선택<i class="ca"></i></span></button>
          </div>
          <div class="gl">편집</div>
        </div>
        <button class="fold" aria-label="Collapse ribbon"><Ic n="chevUp" :s="16" /></button>
      </div>
      <div class="xform">
        <div class="box bn"><input value="L28" aria-label="Name Box" /><i class="ca"></i></div>
        <Ic n="dots" :s="14" />
        <div class="box fn"><Ic n="closeThin" :s="14" /><Ic n="check" :s="14" /><em>f<sub>x</sub></em></div>
        <div class="box ln"><input value="" aria-label="Formula" /><Ic n="chevDown" :s="10" /></div>
      </div>
      <div class="xbody">
        <div class="xwrap">
          <table class="x" :style="{ width: sum(xW) + 34 + 'px' }">
            <colgroup><col class="rh" /><col v-for="(w, i) in xW" :key="i" :style="{ width: w + 'px' }" /></colgroup>
            <thead><tr><th class="corner"></th><th v-for="c in LET" :key="c" :class="{ hot: c === 'L' }">{{ c }}</th></tr></thead>
            <tbody>
              <tr v-for="(row, i) in xRows" :key="i">
                <th :class="{ hot: i === 27 }">{{ i < 33 ? i + 1 : '' }}</th>
                <td v-for="c in row" :key="c.col" :colspan="c.cs" :rowspan="c.rs" :class="c.cls">{{ c.t }}</td>
              </tr>
            </tbody>
          </table>
        </div>
        <div class="xvs"><span><i class="ca up"></i></span><b></b><i class="track"></i><span><i class="ca"></i></span></div>
      </div>
      <div class="xtabs">
        <span class="ar">◀</span><span class="ar">▶</span>
        <button class="on">입찰 변경 양식_구글 AC</button><button>입찰 변경 양식_크리테오</button><button>설명_AC</button>
        <button class="add" aria-label="New sheet"><Ic n="addSh" :s="17" /></button>
        <Ic n="dots" :s="14" class="grip" />
        <div class="xhs"><span>◀</span><b></b><i></i><span>▶</span></div>
      </div>
      <div class="xstat">
        <span>준비</span><Ic n="access" :s="16" /><span>접근성: 조사 필요</span><span class="fx1"></span>
        <button class="vw on" aria-label="Normal"><Ic n="vGrid" :s="14" /></button>
        <button class="vw" aria-label="Page layout"><Ic n="vPage" :s="14" /></button>
        <button class="vw" aria-label="Page break"><Ic n="vBreak" :s="14" /></button>
        <span class="zm">−</span><input type="range" min="0" max="200" value="100" aria-label="Zoom" /><span class="zm">+</span><span class="zp">100%</span>
      </div>
      <div class="task">
        <button class="start" aria-label="Start"><Ic n="winlogo" :s="17" /></button>
        <label class="find"><Ic n="search" :s="17" /><input placeholder="찾기" aria-label="찾기" /></label>
        <button class="tv" aria-label="Task view"><Ic n="taskview" :s="17" /></button>
        <button v-for="(a, i) in apps" :key="i" class="app" :class="{ run: a.u, on: a.n === 'excel' }" :aria-label="a.n"><Ic :n="a.n" :s="24" /></button>
        <span class="fx1"></span>
        <div class="tray">
          <Ic n="sun" :s="24" /><span class="wt">23°C&nbsp; 대체로 화창</span>
          <Ic n="chevUp" :s="18" /><Ic n="meet" :s="16" class="t2" /><Ic n="net" :s="16" class="t2" /><Ic n="vol" :s="16" class="t2" /><span class="ime">A</span>
          <div class="clk"><span>오후 5:36</span><span>2023-06-06</span></div>
          <div class="alert"><Ic n="note" :s="18" /><b>4</b></div>
        </div>
      </div>
    </section>
  </div>
</template>

<style>
html, body { margin: 0; height: 100%; background: #fff; }
#app { height: 100%; }
</style>

<style scoped>
* { box-sizing: border-box; }
.desk { display: flex; height: 100vh; overflow: hidden; font-family: "Open Sans", "Noto Sans CJK KR", sans-serif; font-size: 12px; }
.win { flex: 1 1 0; min-width: 0; display: flex; flex-direction: column; overflow: hidden; }
button, input, select { font: inherit; color: inherit; background: none; border: 0; padding: 0; margin: 0; outline: none; min-width: 0; }
button { display: flex; align-items: center; justify-content: center; white-space: nowrap; }
a { color: inherit; text-decoration: none; }
svg { flex: none; display: block; }
h1, h2 { margin: 0; font-weight: 400; white-space: nowrap; }
.fx1 { flex: 1; }
.ca { display: inline-block; flex: none; width: 0; height: 0; border: 4px solid transparent; border-top: 5px solid currentColor; border-bottom: 0; }
.ca.up { border-top: 0; border-bottom: 5px solid currentColor; }
.slot { flex: none; display: flex; align-items: center; justify-content: center; height: 100%; }
.vs::before { content: ""; width: 1px; height: 20px; background: #c7c7c7; }
.wctl { display: flex; height: 28px; }
.wctl button { width: 46px; }

/* browser chrome */
.chrome { background: #fff; color: #202124; }
.tabs { height: 34px; display: flex; background: #e3dbd8; color: #45494d; padding-left: 9px; flex: none; }
.tab { width: 239px; height: 34px; display: flex; align-items: center; gap: 8px; padding: 0 9px 0 11px; position: relative; }
.tab.on { background: #fff; border-radius: 9px 9px 0 0; color: #202124; }
.tab.bar::after { content: ""; position: absolute; right: 0; top: 8px; height: 19px; width: 1px; background: #8a8582; }
.tt { flex: 1; min-width: 0; overflow: hidden; white-space: nowrap; mask-image: linear-gradient(90deg, #000 88%, transparent); }
.newtab { width: 46px; }
.tabs .wctl { margin-left: auto; color: #777; }
.nav { height: 36px; display: flex; align-items: center; padding: 0 6px 0 5px; flex: none; }
.nb { width: 32px; }
.dis { color: #9b9b9b; }
.url { flex: 1; height: 28px; border-radius: 14px; background: #e1e1e1; margin-left: 7px; margin-right: 6px; display: flex; align-items: center; padding-left: 12px; color: #5f6368; min-width: 0; white-space: nowrap; }
.url a { margin-left: 9px; font-size: 14px; }
.url b { font-weight: 400; color: #202124; }
.ub { width: 32px; }
.ext { width: 32px; }
.av { border-radius: 50%; background: #7b1fa2; color: #fff; display: flex; align-items: center; justify-content: center; font-family: Roboto, "Noto Sans CJK KR", sans-serif; flex: none; }
.av.sm { width: 22px; height: 22px; font-size: 12px; }
.av.lg { width: 32px; height: 32px; font-size: 18px; }
.av.teal { width: 32px; height: 32px; background: #00897b; border: 2px solid #9334e6; font-size: 12px; }
.marks { height: 33px; flex: none; display: flex; align-items: center; gap: 8px; padding: 0 14px 5px; border-bottom: 1px solid #c8cacd; }
.ghead { height: 65px; flex: none; background: #f9fbfd; display: flex; padding: 10px 20px 0 16px; font-family: Roboto, "Noto Sans CJK KR", sans-serif; }
.glogo { margin-top: 5px; }
.gt { margin-left: 9px; }
.gt1 { display: flex; align-items: center; gap: 14px; height: 24px; color: #444746; }
h1 { font-size: 18px; color: #1f1f1f; margin-right: 5px; }
.gmenu { display: flex; gap: 16px; height: 26px; font-size: 14px; color: #1f1f1f; margin-left: 1px; }
.gr { margin-left: auto; display: flex; align-items: center; height: 40px; color: #444746; }
.gr > button { width: 48px; }
.gr .teal { margin-right: 7px; }
.gr > .vid { width: 62px; gap: 12px; margin-left: 10px; }
.gr > .share { width: 107px; height: 40px; border-radius: 20px; background: #c2e7ff; color: #001d35; font-size: 14px; font-weight: 500; gap: 7px; margin: 0 20px; }
.gbar { flex: none; background: #f9fbfd; padding: 0 16px 8px; }
.gtools { height: 40px; background: #edf2fa; border-radius: 20px; display: flex; align-items: center; padding: 0 20px 0 10px; font-family: Roboto, sans-serif; font-size: 14px; color: #444746; }
.gup { margin-left: auto; }
.fs { width: 34px; height: 24px; border: 1px solid #747775; border-radius: 4px; text-align: center; }
.fontn { justify-content: flex-start; padding-left: 13px; }
.num { font-size: 13px; }
.bold { font-weight: 700; font-size: 17px; }
.ital { font-style: italic; font-weight: 700; font-family: "Liberation Serif", serif; font-size: 19px; }
.ucol span { font-size: 16px; line-height: 18px; border-bottom: 4px solid #000; width: 23px; text-align: center; }
.ufill svg { border-bottom: 3px solid #fff; }
.dim { color: #b0b3b6; }
.gform { height: 28px; display: flex; align-items: center; flex: none; padding-left: 14px; color: #202124; font-family: Roboto, sans-serif; }
.gname { width: 72px; font-size: 13px; }
.vline { width: 1px; height: 17px; background: #c7c7c7; margin: 0 12px; }
.gform em { font-family: "Liberation Serif", serif; font-size: 17px; color: #80868b; width: 23px; }
.gform code { font-family: "Liberation Mono", monospace; font-size: 12px; }
.o1 { color: #f7981d; }
.o2 { color: #7e3794; }
.gbody { flex: 1; min-height: 0; display: flex; border-top: 1px solid #c0c0c0; }
.gwrap { flex: 1; min-width: 0; overflow: hidden; }
table { border-collapse: separate; border-spacing: 0; table-layout: fixed; }
.sheet { font-family: "Liberation Sans", "Noto Sans CJK KR", sans-serif; font-size: 12px; color: #000; }
.sheet th, .sheet td { padding: 0; height: 21px; line-height: 18px; overflow: hidden; white-space: nowrap; text-align: center; border: solid #b7b7b7; border-width: 0 1px 1px 0; position: relative; }
.sheet th { font-weight: 400; font-size: 11px; color: #55585c; border-color: #c0c0c0; }
.sheet thead th { height: 24px; }
.sheet thead .corner { background: #f8f9fa; border-bottom: 4px solid #c0c0c0; }
.sheet .hot { background: #d3e3fd; color: #041e49; font-weight: 700; }
.sheet .fz, .sheet thead .fz { background: #c4c4c4; border: 0; }
.sheet .label th, .sheet .label td { height: 23px; }
.sheet tbody td:nth-child(2), .sheet tbody .cb { border-color: transparent; }
.sheet .cb { text-align: left; padding-left: 3px; }
.sheet .data .cb { border-right-color: #b7b7b7; }
.mono { font-family: "Liberation Mono", monospace; color: #ccc; font-size: 13px; }
.sheet .cat { background: #b7b7b7; font-size: 13px; }
.sheet .cc { font-size: 12px; }
.sheet .dt { background: #999; }
.sheet .plan { background: #e6b8af; font-size: 13px; }
.sheet .spend { background: #fff2cc; font-size: 13px; }
.sheet .grey .cc, .sheet .grey .rest { background: #d9d9d9; border-color: transparent; }
.sheet .blank .cc, .sheet .blank .rest { border-color: transparent; text-align: left; padding-left: 3px; }
.sheet .blank .faint { color: #ccc; }
.sheet .blank .blue { color: #0000ff; font-weight: 700; }
.marked::after { content: ""; position: absolute; right: 0; top: 0; border: 3px solid #000; border-left-color: transparent; border-bottom-color: transparent; }
.gvs { width: 12px; flex: none; border-left: 1px solid #dadce0; display: flex; flex-direction: column; align-items: center; }
.gvs .hd { align-self: stretch; height: 24px; background: #f8f9fa; border-bottom: 1px solid #c0c0c0; }
.gvs .th { width: 8px; height: 27px; border-radius: 4px; background: #dadce0; margin: 52px 0 auto; }
.sb { font-size: 7px; line-height: 15px; height: 16px; width: 11px; text-align: center; color: #777; border-top: 1px solid #dadce0; font-family: "DejaVu Sans", sans-serif; }
.ghs { height: 13px; flex: none; display: flex; border-top: 1px solid #dadce0; }
.ghs .l { width: 433px; background: #f8f8f8; }
.ghs .f { width: 5px; background: #dadce0; }
.ghs .th { width: 39px; height: 9px; margin: 1px 125px 0 0; border-radius: 5px; background: #dadce0; }
.ghs .sb { width: 16px; height: 12px; line-height: 12px; border-top: 0; border-left: 1px solid #dadce0; }
.ghs .cr { width: 12px; background: #f1f3f4; }
.gtabs { height: 37px; flex: none; background: #f9fbfd; border-top: 1px solid #dadce0; display: flex; font-family: Roboto, "Noto Sans CJK KR", sans-serif; font-size: 15px; color: #444746; font-weight: 500; }
.stub { width: 6px; height: 15px; background: #c4c4c4; margin: 10px 36px 0 0; }
.ga { width: 40px; }
.ga + .ga { margin-right: 13px; }
.gtab { flex: none; height: 36px; border-bottom: 3px solid; padding: 0 11px 0 12px; justify-content: space-between; background-clip: padding-box; border-right: 1px solid #f9fbfd; }
.gtab.on { background-color: #e1e9f7; color: #0b57d0; font-weight: 700; }
.bdg { background: #0b57d0; color: #fff; font-size: 12px; width: 15px; line-height: 17px; border-radius: 2px; }
.expl { width: 107px; background: #fff; border: solid #dadce0; border-width: 0 1px; gap: 16px; font-size: 12px; color: #188f50; }
.gcol { width: 55px; }

/* dark spreadsheet window */
.xl { background: #262626; color: #f0f0f0; }
.xtitle { height: 34px; flex: none; background: #0a0a0a; display: flex; position: relative; }
.qa { display: flex; align-items: center; padding-left: 22px; flex: 1; }
.xl .ca { border-width: 4px 3px 0; }
.xl .ca.up { border-width: 0 3px 4px; }
.m1 { margin: 0 5px 0 13px; }
.xl .dim { color: #5a5a5a; }
.m2 { margin-left: 16px; }
h2 { font-size: 13px; line-height: 32px; position: absolute; left: 50%; transform: translateX(-50%); }
.login { width: 58px; height: 19px; margin: 6px 9px 0 0; background: #fff; color: #111; border-radius: 2px; font-size: 13px; }
.xtitle .wctl { height: 31px; }
.xmenu { height: 30px; flex: none; background: #0a0a0a; display: flex; align-items: center; font-size: 13px; }
.xmenu button { flex: none; height: 30px; }
.xmenu .on { background: #363636; }
.bulb { margin: 0 10px 0 16px; }
.xmenu .xshare { margin: 0 22px 0 auto; gap: 4px; }
.rib { height: 94px; flex: none; background: #363636; display: flex; font-size: 13px; position: relative; }
.grp { flex: none; display: flex; flex-direction: column; position: relative; }
.grp::after { content: ""; position: absolute; right: 0; top: 4px; bottom: 5px; width: 1px; background: #555; }
.gb { height: 74px; display: flex; }
.gl { height: 20px; line-height: 18px; text-align: center; color: #e2e2e2; position: relative; padding-right: 18px; }
.gl svg { position: absolute; right: 5px; top: 6px; }
.clip { width: 150px; }
.font { width: 256px; }
.align { width: 302px; }
.numb { width: 147px; }
.sty { width: 651px; }
.cel { width: 142px; }
.edt { width: 200px; }
.sty .gl, .cel .gl, .edt .gl { padding-right: 0; }
.lgb { flex-direction: column; justify-content: flex-start; padding-top: 8px; width: 42px; line-height: 16px; }
.lgb > svg { margin-bottom: 2px; }
.lgb > .ca { margin-top: 5px; }
.lgb span .ca { margin: 0 0 3px 3px; }
.clip .lgb { width: 58px; margin-left: 5px; }
.col3 { padding-top: 3px; display: flex; flex-direction: column; }
.col3 button { height: 23px; gap: 4px; justify-content: flex-start; }
.col3 .ca { margin-left: 6px; }
.col3 .ca.far { margin-left: 8px; }
.rows { display: flex; flex-direction: column; gap: 8px; padding: 11px 0 0 8px; }
.rows .r { height: 23px; display: flex; align-items: center; justify-content: flex-start; }
.rib .vs::before { background: #5e5e5e; height: 21px; }
.pick { position: relative; height: 23px; border: 1px solid #666; display: flex; align-items: center; }
.pick select { appearance: none; width: 100%; padding-left: 4px; }
.pick .ca { position: absolute; right: 5px; top: 9px; }
.pick.f { width: 157px; }
.pick.z { width: 41px; border-left: 0; }
.pick.n { width: 131px; }
.ga1, .ga2 { width: 22px; position: relative; font-size: 14px; }
.ga2 { font-size: 12px; }
.ga1::after, .ga2::after { content: ""; position: absolute; right: 1px; top: 0; border: 3px solid transparent; border-bottom: 4px solid #3b8fe0; border-top: 0; }
.ga2::after { border-bottom: 0; border-top: 4px solid #3b8fe0; }
.b { font-weight: 700; }
.i { font-style: italic; }
.u > span { text-decoration: underline; }
.red span { border-bottom: 4px solid #f00; line-height: 16px; width: 16px; }
.hanja { font-size: 9px; }
.hanja span { border-bottom: 3px double #3b8fe0; line-height: 14px; }
.slot.sel { background: #505050; }
.al { width: 132px; padding-left: 10px; }
.wr { padding-left: 6px; position: relative; }
.wr::before { content: ""; position: absolute; left: 0; top: 10px; height: 55px; width: 1px; background: #5e5e5e; }
.wr .r { gap: 4px; }
.wr .ca { margin-left: 8px; }
.numb .rows { padding-left: 9px; }
.pc { font-size: 16px; }
.comma { font-weight: 700; font-size: 20px; }
.comma span { margin-top: -12px; }
.sty .gb { padding-left: 9px; }
.gal { margin: 6px 0 0 1px; width: 547px; height: 62px; border: 1px solid #666; background: #444; display: flex; }
.gg { display: grid; grid-template-columns: repeat(5, 100px); gap: 6px; padding: 5px 0 0 2px; flex: 1; grid-template-rows: 22px 22px; }
.gg button { background: #fff; color: #000; justify-content: flex-start; padding: 0 5px 3px; font-size: 16px; line-height: 18px; }
.gg .cur1 { outline: 2px solid #888; outline-offset: 1px; }
.gg .bad { background: #ffc7ce; color: #9c0006; }
.gg .mid { background: #ffeb9c; color: #9c5700; }
.gg .good { background: #c6efce; color: #006100; }
.gg .warn { color: #f00; }
.gg .calc { background: #f2f2f2; color: #fa7d00; font-weight: 700; border: 1px solid #7f7f7f; }
.gg .memo { background: #ffffcc; border: 1px solid #b2b2b2; }
.gg .desc { color: #7f7f7f; font-style: italic; }
.gs { width: 14px; display: flex; flex-direction: column; }
.gs span { flex: 1; border: solid #666; border-width: 0 0 1px 1px; background: #363636; display: flex; flex-direction: column; gap: 3px; align-items: center; justify-content: center; }
.gs .more::before { content: ""; width: 7px; height: 1px; background: #f0f0f0; }
.cel .gb { padding-left: 9px; }
.edt .gb { padding-left: 9px; }
.edt .col3 { width: 94px; }
.edt .lgb { width: 45px; }
.fold { position: absolute; right: 6px; bottom: 0; }
.xform { height: 48px; flex: none; display: flex; align-items: center; padding: 0 5px; }
.box { height: 28px; background: #363636; border: 1px solid #484848; display: flex; align-items: center; }
.bn { width: 102px; padding: 0 7px; }
.bn input { width: 84px; font-size: 14px; }
.xform > svg { margin: 0 8px; }
.fn { width: 110px; gap: 22px; padding-left: 11px; color: #777; margin-right: 3px; }
.fn em { font-family: "Liberation Serif", serif; font-size: 16px; color: #eee; font-weight: 700; }
.fn sub { font-size: 11px; }
.ln { flex: 1; padding-right: 4px; }
.ln input { flex: 1; }
.xbody { flex: 1; min-height: 0; display: flex; border-bottom: 1px solid #999; }
.xwrap { flex: 1; min-width: 0; overflow: hidden; }
.x { background: #fff; color: #111; font-size: 14px; }
.rh { width: 34px; }
.x th { background: #262626; color: #d0d0d0; font-weight: 400; font-size: 13px; padding: 0; height: 23px; line-height: 18px; border: solid #5a5a5a; border-width: 0 1px 1px 0; }
.x thead th { height: 22px; font-size: 14px; border-bottom-color: #999; border-right-color: #4a4a4a; }
.x tbody th { border-right-color: #999; }
.x thead .corner { background: linear-gradient(135deg, transparent 50%, #777 50%) no-repeat 16px 5px / 14px 14px, #262626; }
.x thead .hot { background: #666; border-bottom: 2px solid #217346; color: #fff; }
.x tbody .hot { background: #666; border-right: 2px solid #217346; color: #fff; }
.x td { padding: 0; height: 23px; line-height: 20px; text-align: center; white-space: pre; border: solid transparent; border-width: 0 1px 1px 0; position: relative; }
.x .bd { border-color: #000; }
.x .br { border-right-color: #000; }
.x .bt { border-bottom-color: #000; }
.x .hd { font-weight: 700; font-size: 16px; }
.x .name { font-size: 15px; }
.x .nm { padding-right: 3px; }
.x .g { background: #d9d9d9; }
.x .p { background: #fce4d6; }
.x .y { background: #fff2cc; }
.x .tl { text-align: left; padding-left: 3px; font-size: 16px; }
.x .tr { text-align: right; padding-right: 3px; font-size: 15px; }
.x .hb { font-weight: 700; }
.x .am { background: #ffe699; border-color: #ffe699; }
.x .memo { padding-left: 8px; }
.x .err::before { content: ""; position: absolute; left: 0; top: 0; border: 3px solid #107c10; border-right-color: transparent; border-bottom-color: transparent; }
.x .cursor::before { content: ""; position: absolute; inset: -2px; border: 2px solid #217346; }
.x .cursor::after { content: ""; position: absolute; right: -4px; bottom: -4px; width: 5px; height: 5px; background: #217346; border: solid #fff; border-width: 1px 0 0 1px; }
.xvs { width: 22px; flex: none; border-left: 1px solid #999; background: #262626; display: flex; flex-direction: column; padding: 2px 4px 0 3px; }
.xvs span { height: 14px; background: #505050; display: flex; align-items: center; justify-content: center; color: #999; }
.xvs b { height: 22px; background: #505050; margin-top: 2px; }
.xvs .track { flex: 1; background: #363636; }
.xtabs { height: 27px; flex: none; display: flex; align-items: flex-start; font-size: 14px; }
.ar { width: 27px; font-size: 9px; line-height: 26px; color: #999; text-align: center; font-family: "DejaVu Sans", sans-serif; }
.ar:first-child { margin-left: 17px; }
.ar + button { margin-left: 29px; }
.xtabs button { height: 24px; padding: 0 12px; }
.xtabs .on { background: #fff; color: #217346; border-bottom: 2px solid #217346; padding: 0 13px; height: 25px; }
.xtabs button:not(.on):not(.add) { position: relative; }
.xtabs button:not(.on):not(.add)::after { content: ""; position: absolute; right: 0; top: 4px; height: 19px; width: 1px; background: #888; }
.xtabs .add { margin-left: 20px; }
.grip { margin: 6px 10px 0 auto; }
.xhs { width: 728px; height: 14px; margin: 7px 22px 0 0; background: #363636; display: flex; gap: 1px; }
.xhs span { width: 13px; background: #505050; color: #999; font-size: 8px; line-height: 14px; text-align: center; font-family: "DejaVu Sans", sans-serif; }
.xhs b { width: 564px; background: #505050; }
.xhs i { flex: 1; }
.xstat { height: 22px; flex: none; border-top: 1px solid #454545; display: flex; align-items: center; padding: 0 8px; color: #e6e6e6; font-size: 13px; }
.xstat > svg { margin: 0 3px 0 18px; }
.vw { width: 40px; height: 21px; }
.vw.on { background: #505050; }
.zm { width: 18px; text-align: center; font-size: 15px; }
.xstat input { appearance: none; width: 102px; height: 14px; background: linear-gradient(#ddd, #ddd) center / 100% 1px no-repeat; }
.xstat input::-webkit-slider-thumb { appearance: none; width: 5px; height: 11px; background: #fff; }
.zp { margin-left: 8px; font-size: 12px; }
.task { height: 40px; flex: none; background: #1e1e1e; display: flex; align-items: stretch; }
.start { width: 48px; color: #fff; }
.find { width: 288px; background: #333; border: 1px solid #666; display: flex; align-items: center; gap: 11px; padding-left: 11px; color: #ddd; font-size: 16px; }
.find input::placeholder { color: #ccc; }
.tv { width: 50px; }
.app { width: 49px; position: relative; }
.app.run::after { content: ""; position: absolute; left: 4px; right: 4px; bottom: 0; height: 2px; background: #76d5f5; }
.app.on { background: #4d4d4d; }
.app.on::after { left: 0; right: 0; }
.tray { display: flex; align-items: center; }
.wt { margin: 0 22px 0 6px; font-size: 14px; }
.t2 { margin-left: 8px; }
.ime { margin: 0 12px 0 10px; font-size: 17px; }
.clk { display: flex; flex-direction: column; align-items: center; line-height: 18px; font-size: 12px; width: 70px; }
.alert { position: relative; width: 57px; display: flex; padding-left: 16px; }
.alert b { position: absolute; left: 24px; top: 6px; width: 16px; height: 16px; border-radius: 50%; background: #333; border: 1px solid #999; font-size: 11px; line-height: 14px; text-align: center; }
</style>
